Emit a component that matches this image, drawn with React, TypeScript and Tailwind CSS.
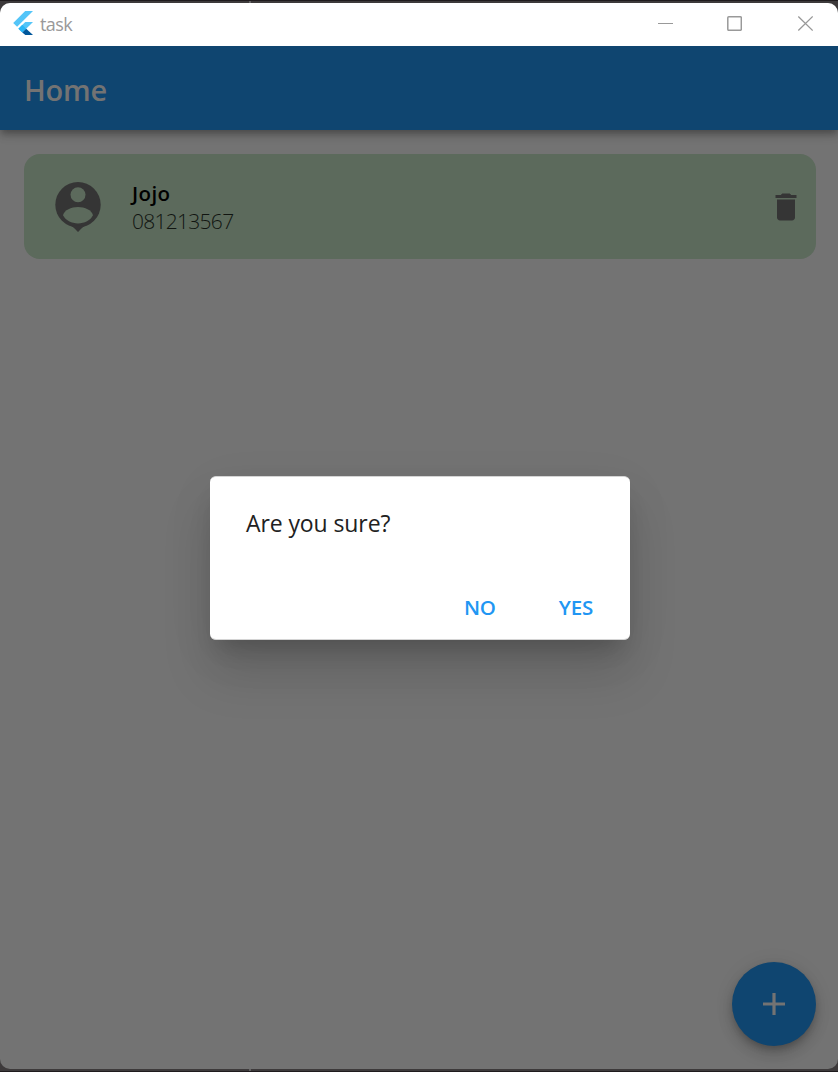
function FlutterLogo() {
  return (
    <svg className="mb-1 ml-[13px] h-6 w-5 shrink-0" viewBox="0 0 20 24">
      <path d="M12.2 0H20L4.100 15.800.2 12z" fill="#54c5f8" />
      <path d="M12.300 11H20l-6.800 6.700-3.900 3.700-3.900-3.700z" fill="#54c5f8" />
      <path d="M5.400 17.700l3.900-3.900 3.900 3.900-3.900 3.900z" fill="#29b6f6" />
      <path d="M9.300 21.500l3.900-3.800L20 24h-7.700z" fill="#01579b" />
    </svg>
  );
}

function TitleBar() {
  return (
    <header className="relative z-10 flex h-[43px] shrink-0 items-center bg-white text-[#999999]">
      <FlutterLogo />
      <span className="mb-px ml-[7px] text-[18px] tracking-[-0.55px]">task</span>
      <div className="ml-auto flex items-center pr-[25px] pb-[3px]">
        <svg className="mr-[53px] h-4 w-4" viewBox="0 0 16 16" stroke="currentColor">
          <path d="M1 8.500h15" />
        </svg>
        <svg className="mr-[55px] h-4 w-4" viewBox="0 0 16 16" fill="none" stroke="currentColor" strokeWidth="1.5">
          <rect x="1.800" y="1.800" width="13.500" height="13.500" rx="1" />
        </svg>
        <svg className="h-4 w-4" viewBox="0 0 16 16" stroke="currentColor" strokeWidth="1.3">
          <path d="M1.300 1.500l14.400 14M15.700 1.500L1.300 15.500" />
        </svg>
      </div>
    </header>
  );
}

function ContactCard() {
  return (
    <article className="flex h-[105px] items-center rounded-[16px] bg-[#5c6a5c]">
      <svg className="ml-[31px] h-[50px] w-[46px]" viewBox="0 0 46 50" fill="#353535">
        <circle cx="23" cy="22.700" r="22.700" />
        <path d="M16 43.800C19 45.500 21 48 23 50c2-2 4-4.500 7-6.200z" />
        <g fill="#5c6a5c">
          <circle cx="23" cy="12.700" r="7.500" />
          <path d="M8 33.200c1.500-5.200 8-8.200 15-8.200s13.500 3 15 8.200c-2.500 5-8.500 8.200-15 8.200s-12.500-3.200-15-8.200z" />
        </g>
      </svg>
      <div className="ml-[31px] flex flex-col">
        <span className="text-[20.5px] leading-7 font-semibold tracking-[0.4px] text-black">Jojo</span>
        <span className="text-[21px] leading-7 font-light tracking-[-0.72px] text-[#111511]">081213567</span>
      </div>
      <svg className="mr-3 ml-auto h-9 w-9" viewBox="0 0 24 24" fill="#353535">
        <path d="M6 19c0 1.100.9 2 2 2h8c1.100 0 2-.9 2-2V7H6v12zM19 4h-3.500l-1-1h-5l-1 1H5v2h14V4z" />
      </svg>
    </article>
  );
}

function ConfirmDialog() {
  return (
    <section
      role="dialog"
      className="absolute top-[475px] left-[210px] flex h-[164px] w-[420px] flex-col justify-between rounded-[6px] border-y border-[#d4d4d4] bg-white shadow-[0_16px_22px_-10px_rgba(0,0,0,0.18),0_34px_50px_0_rgba(0,0,0,0.13),0_12px_50px_2px_rgba(0,0,0,0.05)]"
    >
      <p className="pt-[28px] pl-9 text-[23px] leading-9 tracking-[-0.1px] text-[#212121]">Are you sure?</p>
      <div className="flex justify-end pr-[37px] pb-[17px] text-[20.5px] leading-[30px] font-semibold tracking-[-0.2px] text-[#2196f3]">
        <button className="mr-[63px]">NO</button>
        <button>YES</button>
      </div>
    </section>
  );
}

export default function App() {
  return (
    <div className="relative flex h-[1072px] w-[838px] flex-col overflow-hidden border-y border-[#1f1b1d] bg-[#3d3a3b] py-0.5 font-['Open_Sans','Noto_Sans',sans-serif]">
      <span className="absolute top-[-1px] left-[249px] h-[3px] w-0.5 bg-[#656364]" />
      <div className="flex grow flex-col overflow-hidden rounded-[10px] bg-[#737373]">
        <TitleBar />
        <div className="flex h-[84px] shrink-0 items-center bg-[#0f4570] pt-[3px] pl-6 text-[29px] font-semibold tracking-[-0.2px] text-[#737373] shadow-[0_3px_6px_-1.5px_rgba(0,0,0,0.2),0_6px_7.5px_rgba(0,0,0,0.14),0_1.5px_15px_rgba(0,0,0,0.12)]">
          Home
        </div>
        <main className="flex grow flex-col justify-between px-6 pt-6 pb-[23px] pr-[22px]">
          <ContactCard />
          <button className="flex h-[84px] w-[84px] items-center justify-center self-end rounded-full bg-[#0f4570] shadow-[0_4.5px_7.5px_-1.5px_rgba(0,0,0,0.2),0_9px_15px_rgba(0,0,0,0.14),0_1.5px_20px_rgba(0,0,0,0.08)]">
            <svg className="h-[22px] w-[22px]" viewBox="0 0 22 22" stroke="#737373" strokeWidth="3.2">
              <path d="M11 0v22M0 11h22" />
            </svg>
          </button>
        </main>
      </div>
      <span className="absolute bottom-[-1px] left-[249px] h-[3px] w-0.5 bg-[#656364]" />
      <ConfirmDialog />
    </div>
  );
}
